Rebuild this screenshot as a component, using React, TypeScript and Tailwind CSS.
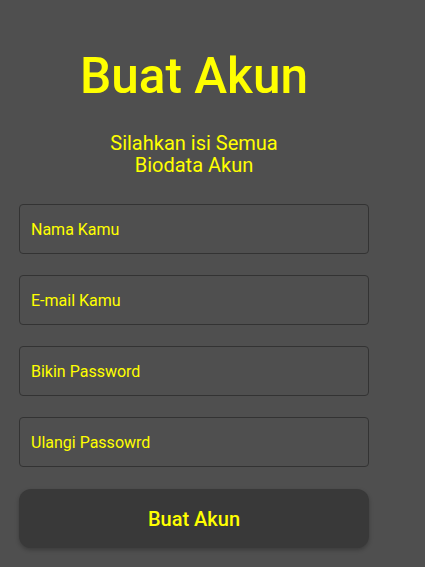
import React from "react";

export default function App() {
  const fields = ["Nama Kamu", "E-mail Kamu", "Bikin Password", "Ulangi Passowrd"];
  return (
    <div className="min-h-[567px] w-full bg-[#4f4f4f]" style={{ fontFamily: "Roboto, sans-serif" }}>
      <div className="w-[350px] ml-[19px] pt-[47px] flex flex-col">
        <h1 className="text-center text-[49.5px] leading-[58px] font-medium text-[#ffff00]">Buat Akun</h1>
        <p className="mt-[27px] text-center text-[20px] leading-[22px] text-[#ffff00]">
          Silahkan isi Semua
          <br />
          Biodata Akun
        </p>
        <div className="mt-[28px] flex flex-col gap-[21px]">
          {fields.map((f) => (
            <input
              key={f}
              placeholder={f}
              className="h-[50px] w-full rounded-[4px] border border-[#333333] bg-[#4f4f4f] px-[11px] text-[16px] text-[#ffff00] placeholder:text-[#ffff00] outline-none"
            />
          ))}
        </div>
        <button className="mt-[22px] h-[59px] w-full rounded-[12px] bg-[#393939] text-[20px] font-medium text-[#ffff00] shadow-[0_2px_4px_rgba(0,0,0,0.25)]">
          Buat Akun
        </button>
      </div>
    </div>
  );
}
